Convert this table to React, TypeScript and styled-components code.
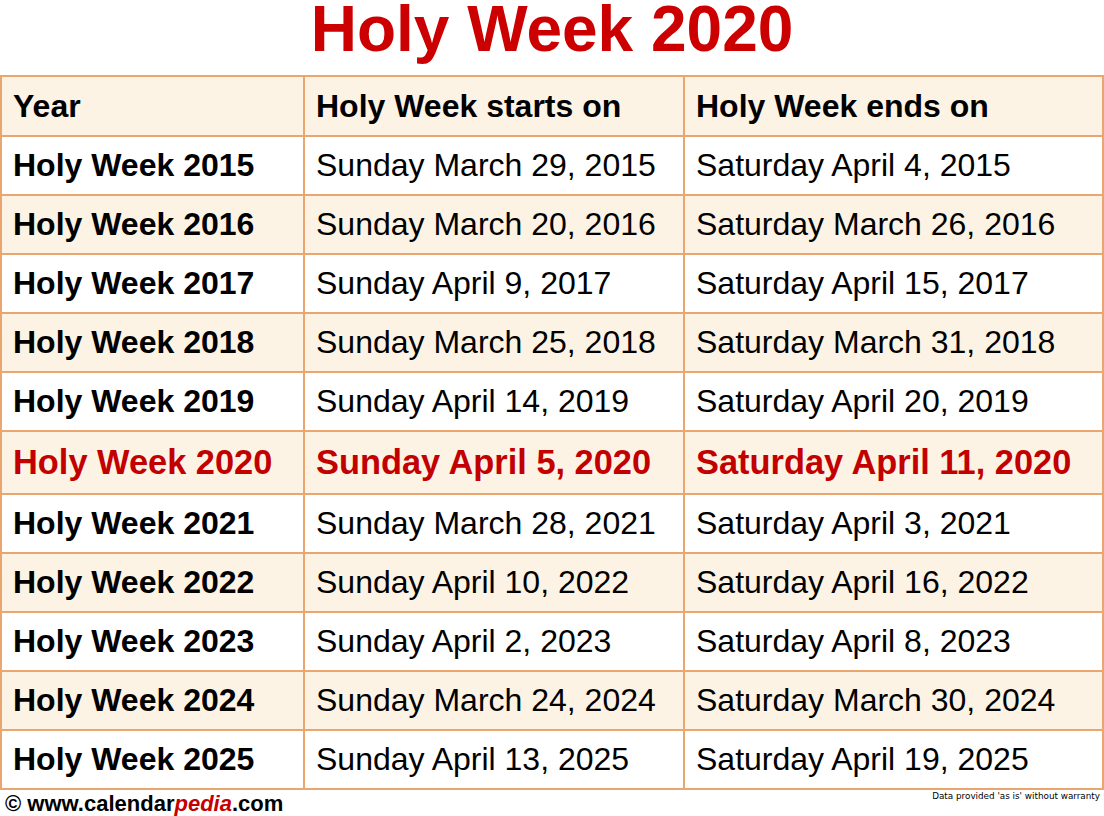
import React from "react";
import styled, { createGlobalStyle } from "styled-components";

const Global = createGlobalStyle`
  html, body { margin: 0; padding: 0; background: #fff; }
  body { font-family: "Liberation Sans", Arial, sans-serif; }
`;

const Page = styled.div`
  width: 1104px;
  height: 816px;
  overflow: hidden;
  display: flex;
  flex-direction: column;
`;

const Title = styled.h1`
  margin: 0;
  height: 75px;
  display: flex;
  align-items: flex-start;
  justify-content: center;
  font-family: "Liberation Sans", Arial, sans-serif;
  font-weight: 700;
  font-size: 64px;
  line-height: 58px;
  color: #cc0000;
`;

const Grid = styled.div`
  display: grid;
  grid-template-columns: 303px 380px 419px;
  border-left: 2px solid #eaa66f;
  border-top: 2px solid #eaa66f;
`;

const Cell = styled.div<{ $bg: boolean; $bold: boolean; $red: boolean; $h: number }>`
  height: ${(p) => p.$h - 2}px;
  box-sizing: content-box;
  border-right: 2px solid #eaa66f;
  border-bottom: 2px solid #eaa66f;
  background: ${(p) => (p.$bg ? "#fdf3e4" : "#ffffff")};
  display: flex;
  align-items: center;
  padding-left: 11px;
  font-family: "Liberation Sans", Arial, sans-serif;
  font-size: ${(p) => (p.$red ? "34.4px" : "32px")};
  font-weight: ${(p) => (p.$bold ? 700 : 400)};
  color: ${(p) => (p.$red ? "#c20000" : "#000")};
  white-space: nowrap;
`;

const HeadCell = styled(Cell)`
  font-weight: 700;
`;

const Footer = styled.div`
  display: flex;
  justify-content: space-between;
  align-items: flex-start;
  padding: 0 4px 0 5px;
  height: 26px;
`;

const Brand = styled.div`
  font-family: "Liberation Sans", Arial, sans-serif;
  font-weight: 700;
  font-size: 22px;
  line-height: 22px;
  padding-top: 3px;
  color: #000;
`;

const Pedia = styled.span`
  color: #c40000;
  font-style: italic;
`;

const Note = styled.div`
  font-family: "DejaVu Sans", sans-serif;
  font-size: 8.8px;
  line-height: 10px;
  padding-top: 1px;
  color: #000;
`;

const rows: [string, string, string][] = [
  ["Holy Week 2015", "Sunday March 29, 2015", "Saturday April 4, 2015"],
  ["Holy Week 2016", "Sunday March 20, 2016", "Saturday March 26, 2016"],
  ["Holy Week 2017", "Sunday April 9, 2017", "Saturday April 15, 2017"],
  ["Holy Week 2018", "Sunday March 25, 2018", "Saturday March 31, 2018"],
  ["Holy Week 2019", "Sunday April 14, 2019", "Saturday April 20, 2019"],
  ["Holy Week 2020", "Sunday April 5, 2020", "Saturday April 11, 2020"],
  ["Holy Week 2021", "Sunday March 28, 2021", "Saturday April 3, 2021"],
  ["Holy Week 2022", "Sunday April 10, 2022", "Saturday April 16, 2022"],
  ["Holy Week 2023", "Sunday April 2, 2023", "Saturday April 8, 2023"],
  ["Holy Week 2024", "Sunday March 24, 2024", "Saturday March 30, 2024"],
  ["Holy Week 2025", "Sunday April 13, 2025", "Saturday April 19, 2025"],
];

export default function App() {
  return (
    <Page>
      <Global />
      <Title>Holy Week 2020</Title>
      <Grid>
        {["Year", "Holy Week starts on", "Holy Week ends on"].map((h) => (
          <HeadCell key={h} $bg $bold $red={false} $h={60}>
            {h}
          </HeadCell>
        ))}
        {rows.map((r, i) => {
          const hi = r[0] === "Holy Week 2020";
          const bg = i % 2 === 1;
          const h = hi ? 63 : 59;
          return r.map((c, j) => (
            <Cell key={`${i}-${j}`} $bg={bg} $bold={hi || j === 0} $red={hi} $h={h}>
              {c}
            </Cell>
          ));
        })}
      </Grid>
      <Footer>
        <Brand>
          © www.calendar<Pedia>pedia</Pedia>.com
        </Brand>
        <Note>Data provided 'as is' without warranty</Note>
      </Footer>
    </Page>
  );
}
